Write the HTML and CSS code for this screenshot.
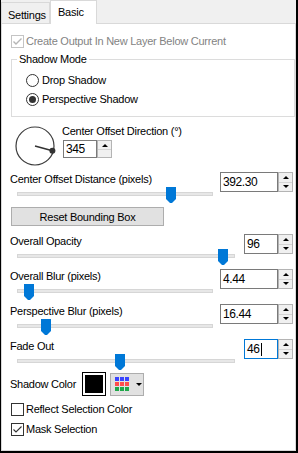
FILE: index.html
```html
<!DOCTYPE html>
<html lang="en">
<head>
  <meta charset="UTF-8">
  <title>Perspective Shadow</title>
  <link rel="stylesheet" href="styles.css">
</head>
<body>
<div class="window">
  <div class="tabs">
    <div class="tab">Settings</div>
    <div class="tab active">Basic</div>
  </div>

  <div class="panel">
    <div class="check disabled first">
      <span class="box"><svg width="11" height="11"><polyline points="1.5,5.5 4,8 9.5,2.5" /></svg></span>
      Create Output In New Layer Below Current
    </div>

    <fieldset class="group">
      <legend>Shadow Mode</legend>
      <div class="radio first">
        <svg width="13" height="13"><circle cx="6.5" cy="6.5" r="6" class="ring" /></svg>
        Drop Shadow
      </div>
      <div class="radio">
        <svg width="13" height="13"><circle cx="6.5" cy="6.5" r="6" class="ring" /><circle cx="6.5" cy="6.5" r="3.5" class="dot" /></svg>
        Perspective Shadow
      </div>
    </fieldset>

    <div class="dial-row">
      <svg class="dial" width="42" height="42">
        <circle cx="21" cy="21" r="19" class="dial-ring" />
        <line x1="21" y1="21" x2="38.4" y2="25.7" class="dial-hand" />
        <circle cx="38.4" cy="25.7" r="3" class="dial-dot" />
      </svg>
      <div class="dial-side">
        <div class="label">Center Offset Direction (°)</div>
        <div class="spin dir">
          <div class="spin-text short">345</div>
          <div class="spin-btns single"><span class="up"><i></i></span><span class="rest"></span></div>
        </div>
      </div>
    </div>

    <div class="field distance">
      <div class="field-row">
        <div class="label">Center Offset Distance (pixels)</div>
        <div class="spin">
          <div class="spin-text">392.30</div>
          <div class="spin-btns"><span class="up"><i></i></span><span class="down"><i></i></span></div>
        </div>
      </div>
      <div class="track"><span class="thumb" style="left:148px"><svg width="10" height="16"><polygon points="0,0 10,0 10,12 6,16 4,16 0,12" /></svg></span></div>
    </div>

    <button class="btn reset">Reset Bounding Box</button>

    <div class="field opacity">
      <div class="field-row">
        <div class="label">Overall Opacity</div>
        <div class="spin">
          <div class="spin-text short">96</div>
          <div class="spin-btns"><span class="up"><i></i></span><span class="down"><i></i></span></div>
        </div>
      </div>
      <div class="track long"><span class="thumb" style="left:200px"><svg width="10" height="16"><polygon points="0,0 10,0 10,12 6,16 4,16 0,12" /></svg></span></div>
    </div>

    <div class="field">
      <div class="field-row">
        <div class="label">Overall Blur (pixels)</div>
        <div class="spin">
          <div class="spin-text">4.44</div>
          <div class="spin-btns"><span class="up"><i></i></span><span class="down"><i></i></span></div>
        </div>
      </div>
      <div class="track"><span class="thumb" style="left:6px"><svg width="10" height="16"><polygon points="0,0 10,0 10,12 6,16 4,16 0,12" /></svg></span></div>
    </div>

    <div class="field">
      <div class="field-row">
        <div class="label">Perspective Blur (pixels)</div>
        <div class="spin">
          <div class="spin-text">16.44</div>
          <div class="spin-btns"><span class="up"><i></i></span><span class="down"><i></i></span></div>
        </div>
      </div>
      <div class="track"><span class="thumb" style="left:23px"><svg width="10" height="16"><polygon points="0,0 10,0 10,12 6,16 4,16 0,12" /></svg></span></div>
    </div>

    <div class="field">
      <div class="field-row">
        <div class="label">Fade Out</div>
        <div class="spin">
          <div class="spin-text short focused">46<span class="caret"></span></div>
          <div class="spin-btns"><span class="up"><i></i></span><span class="down"><i></i></span></div>
        </div>
      </div>
      <div class="track long"><span class="thumb" style="left:97px"><svg width="10" height="16"><polygon points="0,0 10,0 10,12 6,16 4,16 0,12" /></svg></span></div>
    </div>

    <div class="color-row">
      <div class="color-label">Shadow Color</div>
      <div class="swatch"><div class="swatch-fill"></div></div>
      <div class="color-btn">
        <div class="grid">
          <span class="b"></span><span class="b"></span><span class="b"></span>
          <span class="r"></span><span class="r"></span><span class="r"></span>
          <span class="g"></span><span class="g"></span><span class="g"></span>
        </div>
        <span class="drop"></span>
      </div>
    </div>

    <div class="check">
      <span class="box"></span>
      Reflect Selection Color
    </div>
    <div class="check">
      <span class="box"><svg width="11" height="11"><polyline points="1.5,5.5 4,8 9.5,2.5" /></svg></span>
      Mask Selection
    </div>
  </div>
</div>
</body>
</html>
```

FILE: styles.css
```css
body {
  margin: 0;
  font-family: "Liberation Sans", Arial, sans-serif;
  font-size: 11px;
  letter-spacing: -0.25px;
  color: #000;
}
.window {
  width: 298px;
  height: 453px;
  box-sizing: border-box;
  border-left: 1px solid #000;
  border-right: 2px solid #000;
  border-bottom: 2px solid #000;
  background: #f0f0f0;
  display: flex;
  flex-direction: column;
}

/* tabs */
.tabs {
  display: flex;
  align-items: flex-end;
  height: 23px;
  flex-shrink: 0;
}
.tab {
  box-sizing: border-box;
  width: 49px;
  height: 21px;
  border: 1px solid #d9d9d9;
  border-bottom: none;
  padding: 6px 0 0 6px;
  line-height: 13px;
}
.tab.active {
  width: 47px;
  height: 24px;
  margin-bottom: -1px;
  padding: 5px 0 0 7px;
  background: #fff;
  position: relative;
  z-index: 1;
}
.panel {
  flex: 1;
  background: #fff;
  border: 1px solid #d9d9d9;
  padding: 0 2px 0 8px;
}

/* checkboxes and radios */
.check {
  display: flex;
  align-items: center;
  gap: 2px;
  height: 13px;
  margin-top: 7px;
  line-height: 13px;
}
.check.first {
  margin-top: 11px;
}
.box {
  box-sizing: border-box;
  width: 13px;
  height: 13px;
  margin-left: 1px;
  border: 1px solid #333;
  background: #fff;
}
.box svg {
  display: block;
}
.box polyline {
  fill: none;
  stroke: #333;
  stroke-width: 1.1;
}
.check.disabled {
  color: #838383;
}
.check.disabled .box {
  border-color: #c4c4c4;
}
.check.disabled polyline {
  stroke: #b5b5b5;
  stroke-width: 1.4;
}

.group {
  margin: 5px -2px 0 1px;
  padding: 0 0 10px 0;
  border: 1px solid #dcdcdc;
}
.group legend {
  margin-left: 5px;
  padding: 0 2px;
  line-height: 12px;
}
.radio {
  display: flex;
  align-items: center;
  gap: 3px;
  height: 13px;
  margin: 6px 0 0 14px;
  line-height: 13px;
}
.radio.first {
  margin-top: 9px;
}
.radio svg {
  display: block;
}
.ring {
  fill: #fff;
  stroke: #333;
  stroke-width: 1;
}
.dot {
  fill: #333;
}

/* direction dial */
.dial-row {
  display: flex;
  margin-top: 8px;
  height: 42px;
}
.dial {
  margin-left: 4px;
}
.dial-ring {
  fill: none;
  stroke: #3c3c3c;
  stroke-width: 1.2;
}
.dial-hand {
  stroke: #333;
  stroke-width: 1.6;
}
.dial-dot {
  fill: #333;
}
.dial-side {
  margin-left: 6px;
}
.label {
  padding-top: 1px;
  line-height: 13px;
}
.dial-side .label {
  padding-top: 0;
}

/* spin boxes */
.spin {
  display: flex;
  height: 20px;
}
.spin.dir {
  height: 18px;
  margin: 2px 0 0 1px;
}
.spin-text {
  box-sizing: border-box;
  width: 58px;
  border: 1px solid #7a7a7a;
  background: #fff;
  padding-left: 2px;
  font-size: 12px;
  letter-spacing: -0.4px;
  display: flex;
  align-items: center;
}
.spin-text.short {
  width: 34px;
}
.spin-text.focused {
  border-color: #0078d7;
}
.caret {
  width: 1px;
  height: 13px;
  background: #000;
  margin-left: 1px;
}
.spin-btns {
  box-sizing: border-box;
  width: 15px;
  border: 1px solid #b4b4b4;
  background: #f0f0f0;
  display: flex;
  flex-direction: column;
}
.spin-btns span {
  flex: 1;
  display: flex;
  align-items: center;
  justify-content: center;
}
.spin-btns .down {
  border-top: 1px solid #d4d4d4;
}
.spin-btns.single .up {
  flex: 0 0 8px;
  border-bottom: 1px solid #d4d4d4;
}
.spin-btns i {
  width: 0;
  height: 0;
  border-left: 3px solid transparent;
  border-right: 3px solid transparent;
}
.up i {
  border-bottom: 3px solid #000;
}
.down i {
  border-top: 3px solid #000;
}

/* slider fields */
.field {
  margin-top: 11px;
}
.field.distance {
  margin-top: 5px;
}
.field.opacity {
  margin-top: 8px;
}
.field-row {
  display: flex;
  justify-content: space-between;
  height: 20px;
}
.track {
  position: relative;
  box-sizing: border-box;
  width: 196px;
  height: 4px;
  margin-left: 7px;
  background: #e7e7e7;
  border: 1px solid #d6d6d6;
}
.track.long {
  width: 218px;
}
.thumb {
  position: absolute;
  top: -6px;
  width: 10px;
  height: 16px;
}
.thumb svg {
  display: block;
}
.thumb polygon {
  fill: #0078d7;
}

.btn {
  display: block;
  box-sizing: border-box;
  width: 153px;
  height: 19px;
  margin: 11px 0 0 1px;
  padding: 0;
  background: #e1e1e1;
  border: 1px solid #adadad;
  font: inherit;
  letter-spacing: inherit;
  color: #000;
  text-align: center;
}

/* shadow colour */
.color-row {
  display: flex;
  align-items: center;
  height: 24px;
  margin-top: 9px;
  margin-bottom: 0;
}
.color-label {
  width: 72px;
}
.swatch {
  box-sizing: border-box;
  width: 24px;
  height: 24px;
  border: 1px solid #000;
  padding: 2px;
  background: #fff;
}
.swatch-fill {
  width: 100%;
  height: 100%;
  background: #000;
}
.color-btn {
  box-sizing: border-box;
  width: 34px;
  height: 23px;
  margin-left: 4px;
  background: #e1e1e1;
  border: 1px solid #adadad;
  display: flex;
  align-items: center;
  padding-left: 4px;
}
.grid {
  display: grid;
  grid-template-columns: repeat(3, 4px);
  grid-auto-rows: 4px;
  gap: 1px;
}
.grid .b {
  background: #3a44ff;
}
.grid .r {
  background: #ff4c4c;
}
.grid .g {
  background: #1fa84a;
}
.drop {
  margin-left: 7px;
  width: 0;
  height: 0;
  border-left: 3px solid transparent;
  border-right: 3px solid transparent;
  border-top: 3px solid #000;
}
.color-row + .check {
  margin-top: 7px;
}
```
